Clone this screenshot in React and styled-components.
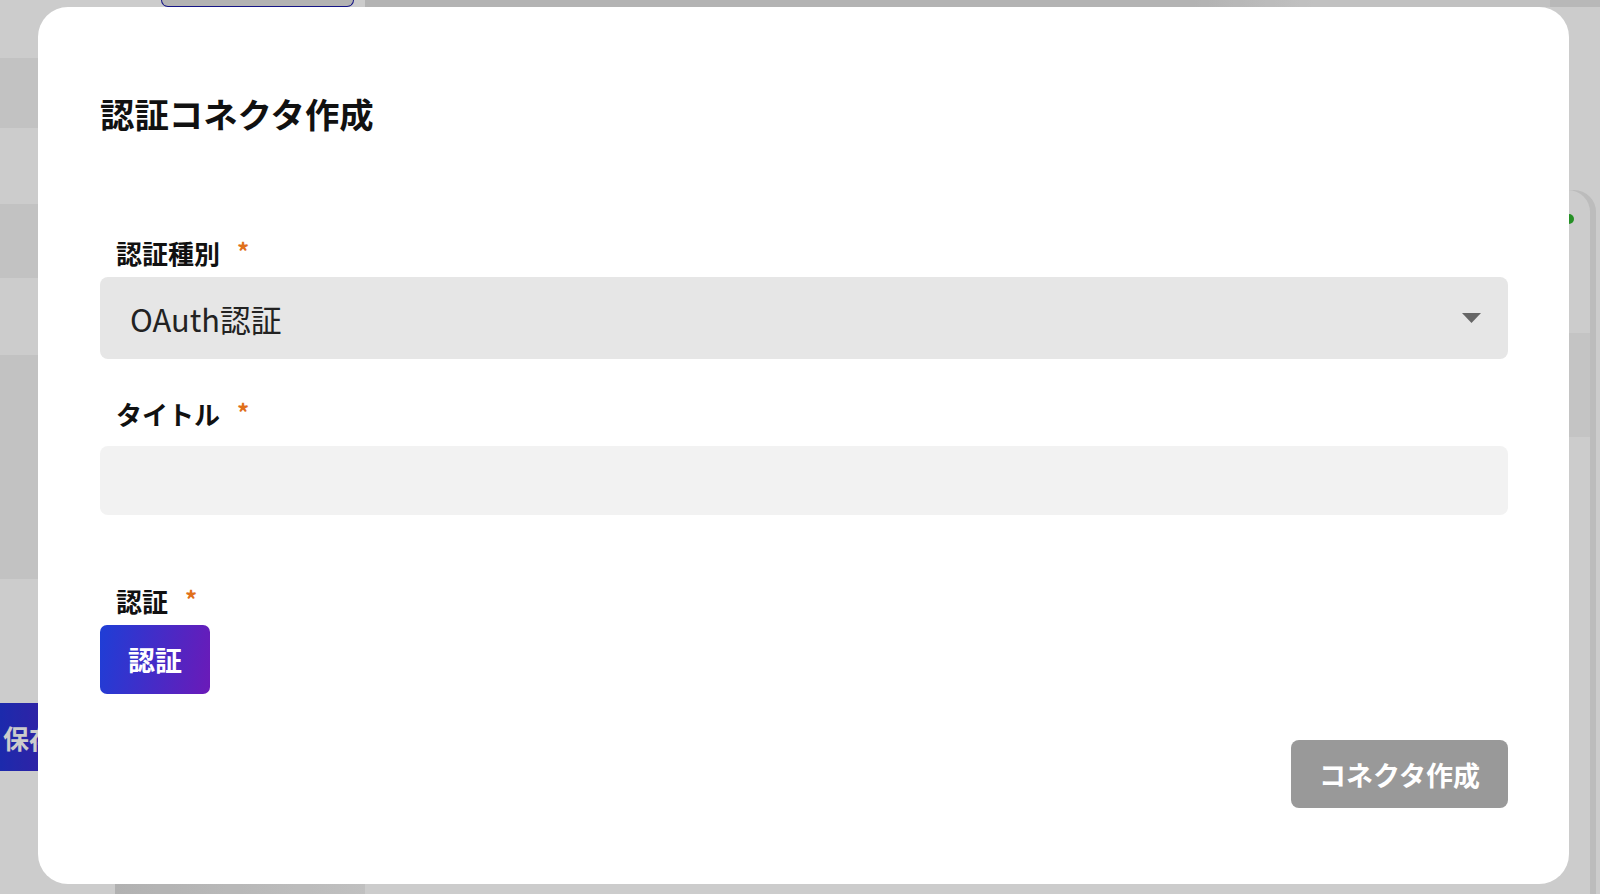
import React from 'react';
import styled, { createGlobalStyle } from 'styled-components';

const FONT = `'Noto Sans CJK JP', 'Noto Sans', sans-serif`;

const GlobalStyle = createGlobalStyle`
  html, body {
    margin      : 0;
    padding     : 0;
    height      : 100%;
    overflow    : hidden;
    font-family : ${ FONT };
  }
`;

// ---- page behind the dialog ----

const Page = styled.div`
  display               : grid;
  grid-template-columns : 115px 250px 1fr 50px;
  height                : 100vh;
  background            : #fff;
`;

const Sidebar = styled.div`
  display        : flex;
  flex-direction : column;
`;

const SideRow = styled.div`
  height     : ${ p => p.h }px;
  background : ${ p => p.shade ? '#f3f3f3' : '#fff' };
  flex       : ${ p => p.grow ? 1 : 'none' };
`;

const SaveButton = styled.div`
  height      : 68px;
  display     : flex;
  align-items : center;
  padding     : 0 0 0 3px;
  background  : linear-gradient(90deg, #2335d8, #6a1bc0);
  color       : #fff;
  font-size   : 26px;
  font-weight : 700;
`;

const ListPane = styled.div`
  display         : flex;
  flex-direction  : column;
  justify-content : space-between;
`;

const Tab = styled.div`
  height        : 7px;
  width         : 193px;
  margin-left   : 46px;
  border        : 1.5px solid #1a1aa8;
  border-top    : none;
  border-radius : 0 0 8px 8px;
  box-sizing    : border-box;
  background    : #e0e0e0;
`;

const ListFoot = styled.div`
  height     : 11px;
  background : linear-gradient(90deg, #dedede, #f0f0f0);
`;

const MainPane = styled.div`
  display        : flex;
  flex-direction : column;
`;

const TopStrip = styled.div`
  height     : 7px;
  background : linear-gradient(90deg, #e0e0e0 0%, #e0e0e0 70%, #f2f2f2 80%, #f2f2f2 100%);
`;

const RightRail = styled.div`
  display        : flex;
  flex-direction : column;
  background     : #fff;
`;

const RailTop = styled.div`
  height     : 190px;
  background : linear-gradient(180deg, #e6e6e6 0, #e6e6e6 7px, #fff 7px);
`;

const RailCard = styled.div`
  flex          : 1;
  margin-right  : 10px;
  border-radius : 0 22px 0 0;
  background    : #fff;
  box-shadow    : 6px 0 0 #ebebeb;
  position      : relative;
`;

const GreenDot = styled.span`
  position      : absolute;
  top           : 24px;
  left          : 14px;
  width         : 10px;
  height        : 10px;
  border-radius : 50%;
  background    : #2fb52f;
`;

const RailBand = styled.div`
  height     : 104px;
  margin-top : 143px;
  background : #f5f5f5;
`;

// ---- dialog ----

const Overlay = styled.div`
  position   : fixed;
  inset      : 0;
  display    : flex;
  padding    : 7px 31px 10px 38px;
  background : rgba(0, 0, 0, .2);
`;

const Modal = styled.div`
  flex           : 1;
  display        : flex;
  flex-direction : column;
  padding        : 85px 61px 0 62px;
  background     : #fff;
  border-radius  : 30px;
  color          : #111;
`;

const Title = styled.h2`
  margin      : 0 0 103px;
  font-size   : 34.4px;
  line-height : 42px;
  font-weight : 700;
`;

const Label = styled.div`
  display     : flex;
  align-items : center;
  padding     : 0 0 0 16px;
  margin-top  : ${ p => p.top || 0 }px;
  font-size   : 26px;
  line-height : 32px;
  font-weight : 700;
`;

const Required = styled.span`
  margin-left : 17px;
  color       : #e0701a;
  font-size   : 24px;
  position    : relative;
  top         : -2px;
`;

const Select = styled.div`
  height          : 82px;
  margin-top      : 8px;
  display         : flex;
  align-items     : center;
  justify-content : space-between;
  padding         : 0 27px 0 30px;
  background      : #e6e6e6;
  border-radius   : 8px;
  font-size       : 30.8px;
  color           : #222;
`;

const TextInput = styled.div`
  height        : 69px;
  margin-top    : 16px;
  background    : #f2f2f2;
  border-radius : 8px;
`;

const AuthButton = styled.button`
  width         : 110px;
  height        : 69px;
  margin-top    : 8px;
  border        : none;
  border-radius : 7px;
  background    : linear-gradient(100deg, #1e3ed6, #6b1ab8);
  color         : #fff;
  font-family   : ${ FONT };
  font-size     : 27px;
  font-weight   : 700;
  padding       : 0;
`;

const Footer = styled.div`
  display         : flex;
  justify-content : flex-end;
  margin-top      : 46px;
`;

const CreateButton = styled.button`
  height        : 68px;
  padding       : 0 28px;
  border        : none;
  border-radius : 8px;
  background    : #999;
  color         : #fff;
  font-family   : ${ FONT };
  font-size     : 27px;
  font-weight   : 700;
`;

const Caret = () => (
  <svg width="19" height="10" viewBox="0 0 19 10">
    <polygon points="0,0 19,0 9.5,10" fill="#666" />
  </svg>
);

const Field = ({ label, top, children }) => (
  <>
    <Label top={ top }>
      { label }
      <Required>*</Required>
    </Label>
    { children }
  </>
);

export default function App() {
  return (
    <>
      <GlobalStyle />
      <Page>
        <Sidebar>
          <SideRow h={ 58 } />
          <SideRow h={ 70 } shade />
          <SideRow h={ 76 } />
          <SideRow h={ 74 } shade />
          <SideRow h={ 77 } />
          <SideRow h={ 224 } shade />
          <SideRow h={ 124 } />
          <SaveButton>保存</SaveButton>
          <SideRow grow />
        </Sidebar>
        <ListPane>
          <Tab />
          <ListFoot />
        </ListPane>
        <MainPane>
          <TopStrip />
        </MainPane>
        <RightRail>
          <RailTop />
          <RailCard>
            <GreenDot />
            <RailBand />
          </RailCard>
        </RightRail>
      </Page>

      <Overlay>
        <Modal>
          <Title>認証コネクタ作成</Title>

          <Field label="認証種別">
            <Select>
              <span>OAuth認証</span>
              <Caret />
            </Select>
          </Field>

          <Field label="タイトル" top={ 39 }>
            <TextInput />
          </Field>

          <Field label="認証" top={ 70 }>
            <div>
              <AuthButton>認証</AuthButton>
            </div>
          </Field>

          <Footer>
            <CreateButton>コネクタ作成</CreateButton>
          </Footer>
        </Modal>
      </Overlay>
    </>
  );
}
